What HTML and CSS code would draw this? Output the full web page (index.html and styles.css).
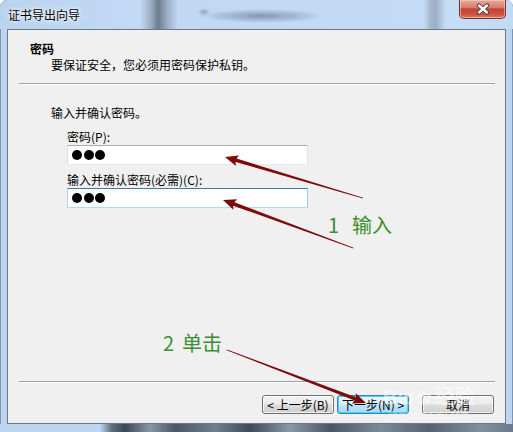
FILE: index.html
```html
<!DOCTYPE html>
<html lang="zh-CN">
<head>
    <meta charset="UTF-8">
    <link rel="stylesheet" href="styles.css">
</head>
<body>

    <div class="window">
        <div class="titlebar">
            <span class="title">证书导出向导</span>
            <div class="close">
                <svg width="16" height="12" viewBox="-8 -6 16 12">
                    <path d="M-4,-3.5 L4,3.5 M4,-3.5 L-4,3.5" stroke="#3b3b3b" stroke-width="4.2" stroke-linecap="round"/>
                    <path d="M-4,-3.5 L4,3.5 M4,-3.5 L-4,3.5" stroke="#ffffff" stroke-width="2.4" stroke-linecap="round"/>
                </svg>
            </div>
        </div>

        <div class="client">
            <div class="header">
                <div class="h-title">密码</div>
                <div class="h-sub">要保证安全，您必须用密码保护私钥。</div>
            </div>
            <div class="sep"></div>

            <div class="content">
                <p class="intro">输入并确认密码。</p>
                <div class="fields">
                    <label class="lbl lbl-first">密码(P):</label>
                    <div class="pw"><i></i><i></i><i></i></div>
                    <label class="lbl lbl-second">输入并确认密码(必需)(C):</label>
                    <div class="pw pw-focus"><i></i><i></i><i></i></div>
                </div>
            </div>

            <div class="sep"></div>
            <div class="footer">
                <button type="button" class="btn">&lt; 上一步(B)</button>
                <button type="button" class="btn btn-default">下一步(N) &gt;</button>
                <button type="button" class="btn btn-cancel">取消</button>
            </div>
        </div>

        <div class="frame-bottom"></div>

        <!-- annotations drawn over the dialog -->
        <svg class="arrows" width="513" height="432" viewBox="0 0 513 432">
            <g transform="translate(225 157) rotate(16.55)">
                <polygon points="0,0 13,-5.5 11.5,-1.8 144,-0.4 144,0.4 11.5,1.8 13,5.5"/>
            </g>
            <g transform="translate(223 200) rotate(20.26)">
                <polygon points="0,0 13,-5.5 11.5,-1.8 139,-0.4 139,0.4 11.5,1.8 13,5.5"/>
            </g>
            <g transform="translate(366 403) rotate(200.87)">
                <polygon points="0,0 13,-5.5 11.5,-1.8 149,-0.4 149,0.4 11.5,1.8 13,5.5"/>
            </g>
        </svg>
        <div class="note note-one"><span class="num">1</span><span class="word">输入</span></div>
        <div class="note note-two"><span class="num">2</span><span class="word">单击</span></div>

        <div class="watermark">
            <span class="wm-big">Bai<span class="paw">&#10047;</span>经验</span>
            <span class="wm-small">jingyan.baidu.com</span>
        </div>
    </div>

</body>
</html>
```

FILE: styles.css
```css
        body {
            margin: 0;
            background: #ffffff;
            font-family: "Noto Sans CJK SC", "Liberation Sans", sans-serif;
            font-size: 12px;
            color: #000;
        }

        .window {
            position: relative;
            width: 513px;
            height: 432px;
            display: flex;
            flex-direction: column;
            background: #bcd4ee;
            border-radius: 7px 7px 0 0;
            box-shadow: inset 0 0 0 1px rgba(70, 95, 125, 0.55);
            overflow: hidden;
        }

        /* title bar with the blurred desktop showing through */
        .titlebar {
            height: 29px;
            display: flex;
            justify-content: space-between;
            align-items: flex-start;
            background:
                radial-gradient(ellipse 62px 7px at 262px 16px, rgba(55, 70, 95, 0.45), rgba(55, 70, 95, 0) 100%),
                radial-gradient(ellipse 6px 4px at 204px 12px, rgba(55, 70, 95, 0.35), rgba(55, 70, 95, 0) 100%),
                linear-gradient(to right, #bad3ee 0, #c2daf4 140px, #9aaec3 151px, #6a7b8e 158px, #95a9be 166px, #c0d8f2 178px, #c3dbf5 424px, #a3b6ca 431px, #9cb0c5 436px, #c6ddf6 446px, #c2daf3 513px);
            border-radius: 7px 7px 0 0;
        }

        .title {
            padding: 8px 0 0 8px;
            line-height: 14px;
            text-shadow: 0 0 6px #ffffff, 0 0 3px #ffffff;
        }

        .close {
            width: 47px;
            height: 19px;
            margin-right: 7px;
            box-sizing: border-box;
            border: 1px solid #6e3a34;
            border-top: 0;
            border-radius: 0 0 5px 5px;
            background: linear-gradient(#e4aa9c 0%, #d77c6b 42%, #c24331 50%, #cf5140 80%, #dd7a5e 100%);
            box-shadow: inset 0 0 0 1px rgba(255, 220, 210, 0.5);
            display: flex;
            align-items: center;
            justify-content: center;
        }

        .client {
            flex: 1;
            margin: 0 7px;
            display: flex;
            flex-direction: column;
            background: #f0f0f0;
            border: 1px solid #6a7a8b;
        }

        .frame-bottom {
            height: 8px;
            background: linear-gradient(to right, #bcd6f1 0, #bcd6f1 100px, #5d6c7c 112px, #3c4857 125px, #8796a6 150px, #4a5766 175px, #6f7f90 215px, #3e4a58 250px, #8a99a8 290px, #4a5665 330px, #7b8a9a 380px, #56626f 430px, #7f8fa0 480px, #6b7b8c 513px);
        }

        .header {
            padding: 12px 0 11px 22px;
        }

        .h-title {
            font-weight: bold;
            line-height: 14px;
        }

        .h-sub {
            margin: 2px 0 0 21px;
            line-height: 14px;
        }

        .sep {
            margin: 0 10px 0 11px;
            border-top: 1px solid #a0a0a0;
            border-bottom: 1px solid #ffffff;
        }

        .content {
            flex: 1;
            padding: 21px 0 0 43px;
        }

        .intro {
            margin: 0;
            line-height: 14px;
        }

        .fields {
            margin-left: 16px;
            display: flex;
            flex-direction: column;
        }

        .lbl {
            line-height: 14px;
        }

        .lbl-first {
            margin-top: 10px;
        }

        .lbl-second {
            margin-top: 8px;
        }

        .pw {
            width: 241px;
            height: 20px;
            margin-top: 1px;
            box-sizing: border-box;
            display: flex;
            align-items: center;
            gap: 1.5px;
            padding-left: 4px;
            background: #ffffff;
            border: 1px solid;
            border-color: #abadb3 #e2e3ea #e3e9ef #dbdfe6;
        }

        .pw-focus {
            border-color: #3d7bad #a4c9e3 #b7d9ed #b5cfe7;
        }

        .pw i {
            width: 10px;
            height: 10px;
            border-radius: 50%;
            background: #000;
        }

        .footer {
            display: flex;
            justify-content: flex-end;
            padding: 12px 11px 9px 0;
        }

        .btn {
            width: 72px;
            height: 19px;
            padding: 0;
            font-family: inherit;
            font-size: 12px;
            line-height: 15px;
            color: #000;
            border: 1px solid #707070;
            border-radius: 3px;
            background: linear-gradient(#f2f2f2 0%, #ebebeb 48%, #dddddd 52%, #cfcfcf 100%);
            box-shadow: inset 0 0 0 1px rgba(255, 255, 255, 0.7);
        }

        .btn-default {
            margin-left: 3px;
            border-color: #3c7fb1;
            background: linear-gradient(#eaf6fd 0%, #d9f0fc 48%, #bee6fd 52%, #a7d9f5 100%);
            box-shadow: inset 0 0 0 1px #48d1f9;
        }

        .btn-cancel {
            margin-left: 13px;
        }

        .arrows {
            position: absolute;
            left: 0;
            top: 0;
            pointer-events: none;
            fill: #7d0b0b;
        }

        .note {
            position: absolute;
            font-size: 20px;
            line-height: 24px;
            color: #3a8f2e;
        }

        .note .word {
            margin-left: 13px;
        }

        .note-one {
            left: 328px;
            top: 213px;
        }

        .note-two {
            left: 163px;
            top: 331px;
        }

        .note-two .word {
            margin-left: 8px;
        }

        .watermark {
            position: absolute;
            left: 383px;
            top: 386px;
            display: flex;
            flex-direction: column;
            align-items: center;
            color: rgba(255, 255, 255, 0.55);
            pointer-events: none;
        }

        .wm-big {
            font-family: "Liberation Sans", "Noto Sans CJK SC", sans-serif;
            font-size: 20px;
            font-weight: bold;
            line-height: 22px;
        }

        .paw {
            font-size: 16px;
            margin: 0 2px;
        }

        .wm-small {
            font-family: "Liberation Sans", sans-serif;
            font-size: 10px;
            line-height: 12px;
        }
```
